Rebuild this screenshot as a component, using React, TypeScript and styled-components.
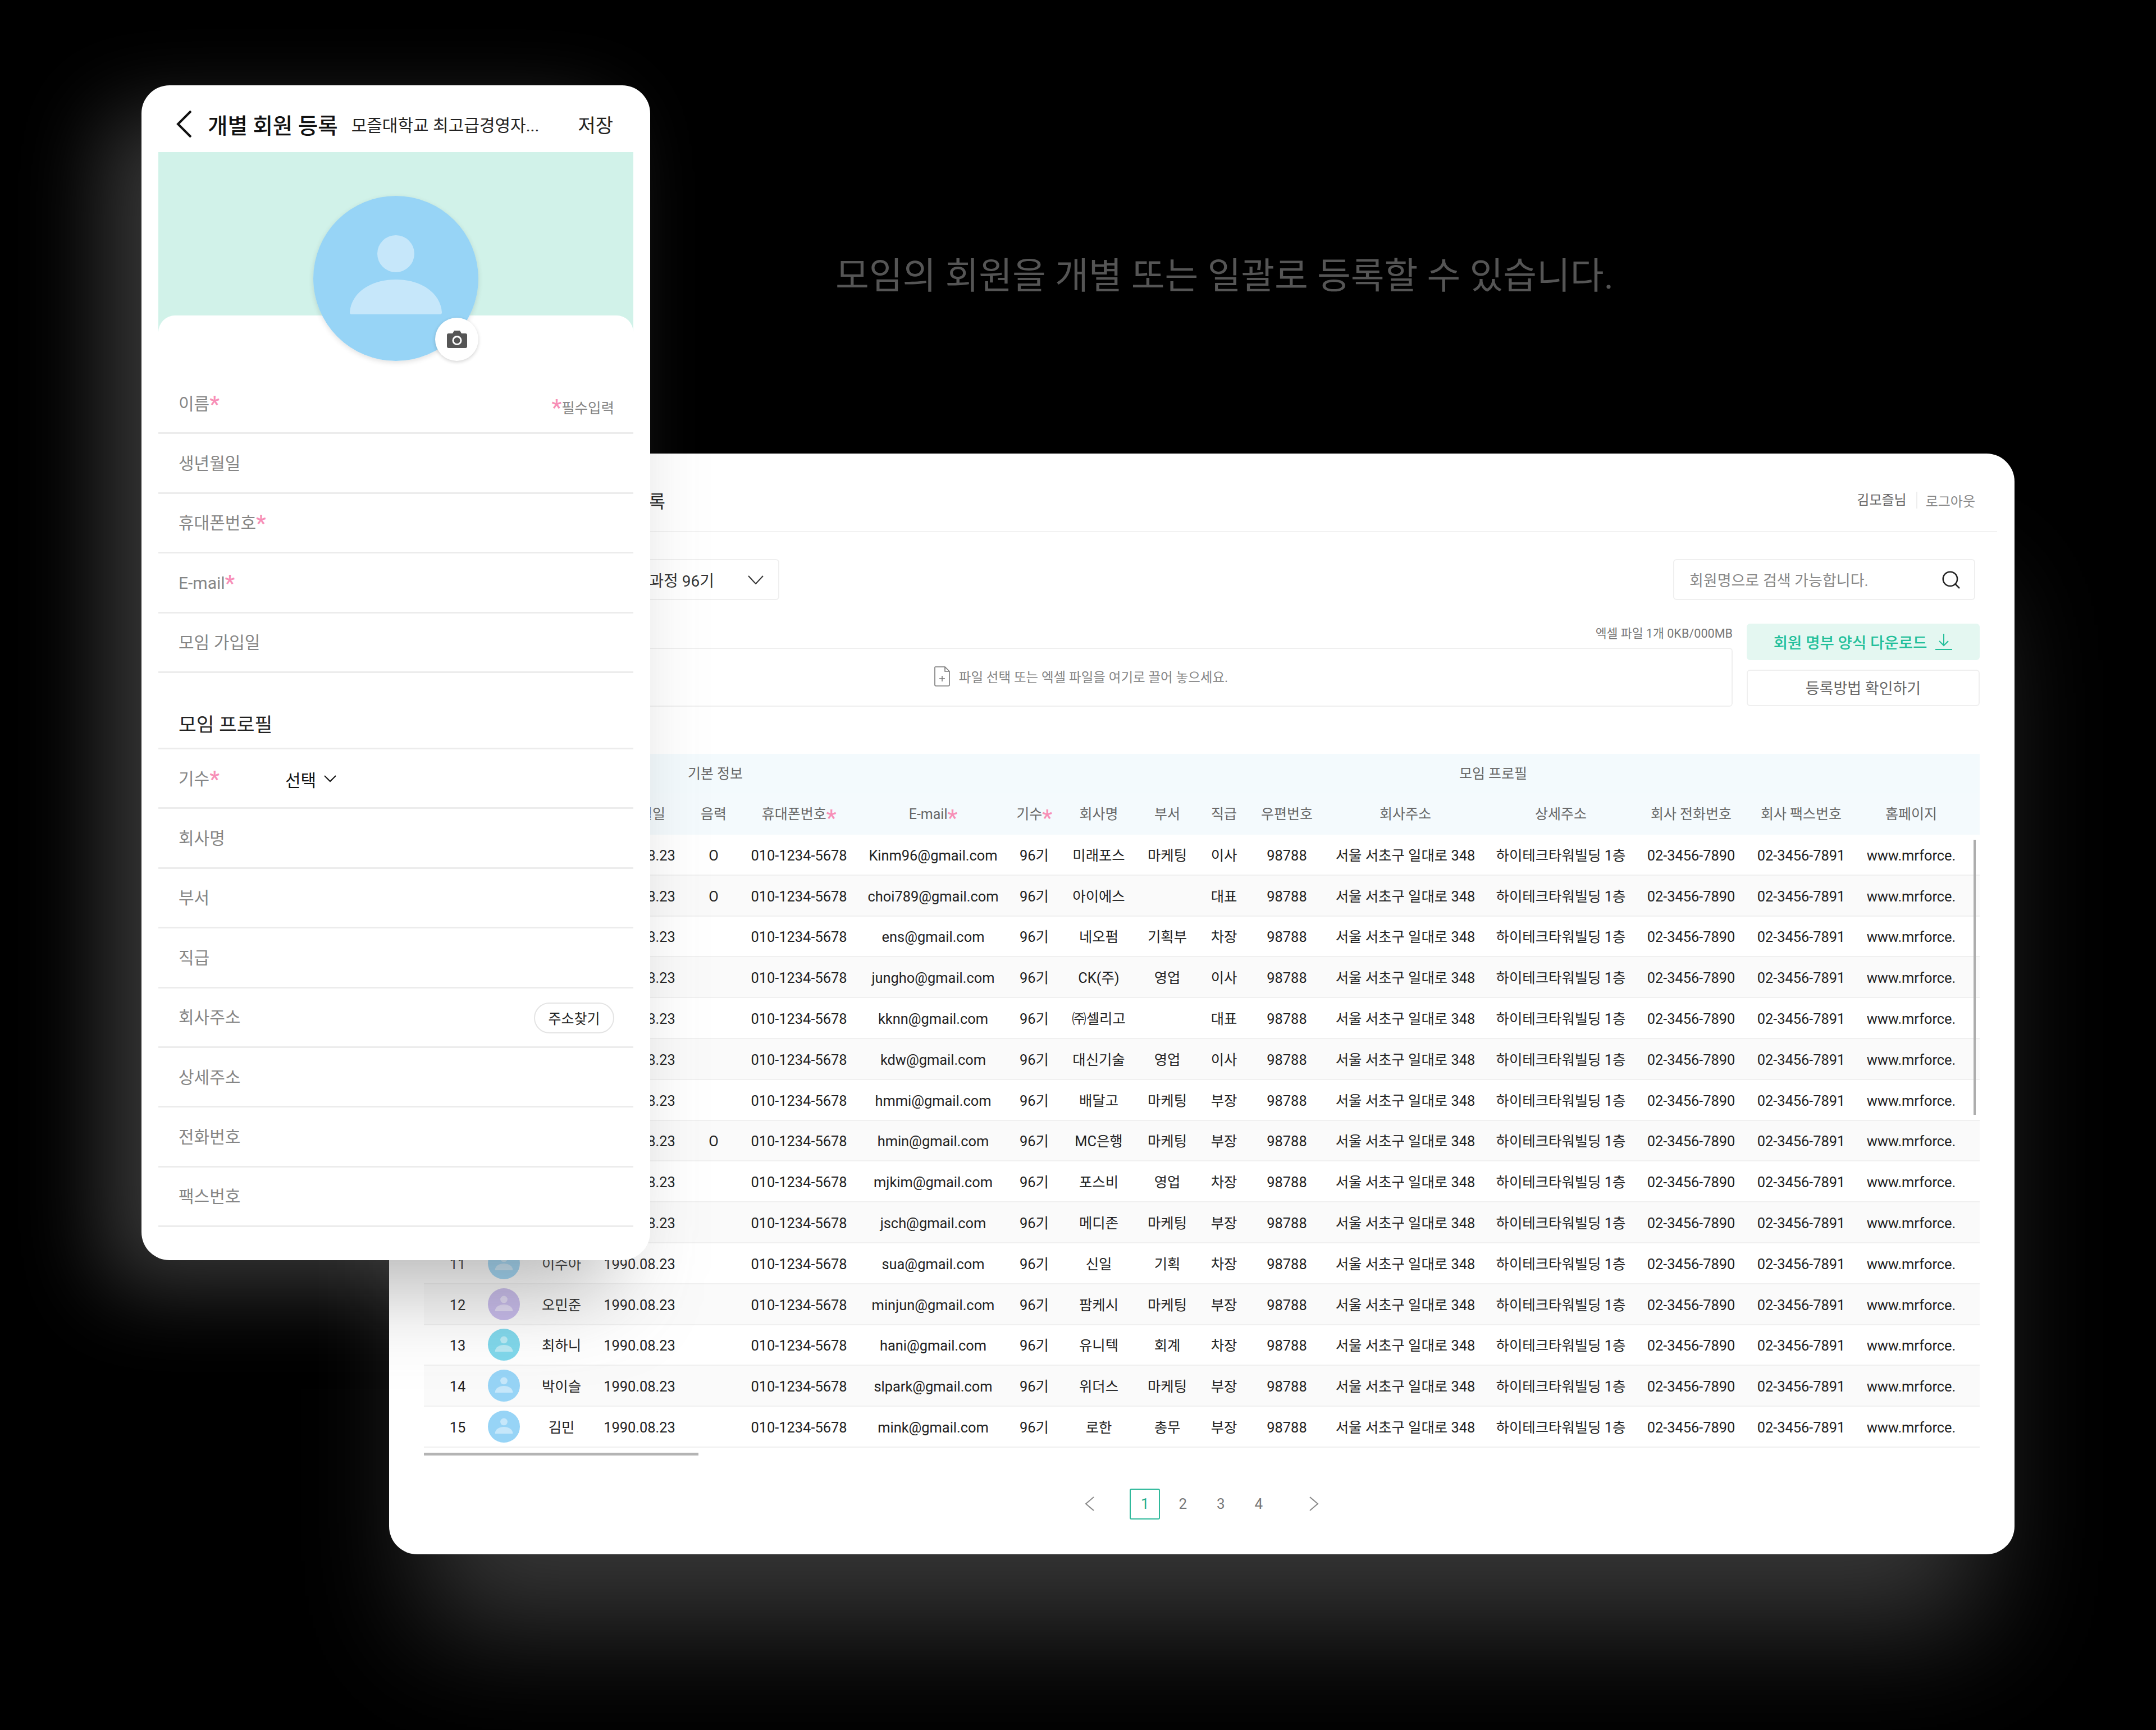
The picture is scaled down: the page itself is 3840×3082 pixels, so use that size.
import styled, { createGlobalStyle } from "styled-components";
import { Search } from "lucide-react";

const FONT = `Roboto, "Noto Sans CJK KR", "Noto Sans", sans-serif`;
const COLUMNS = "112px 60px 146px 132px 132px 172px 306px 54px 176px 68px 134px 90px 332px 222px 242px 150px 242px";

const headers = [
  { label: "번호" },
  { label: "사진" },
  { label: "이름", required: true },
  { label: "생년월일" },
  { label: "음력" },
  { label: "휴대폰번호", required: true },
  { label: "E-mail", required: true },
  { label: "기수", required: true },
  { label: "회사명" },
  { label: "부서" },
  { label: "직급" },
  { label: "우편번호" },
  { label: "회사주소" },
  { label: "상세주소" },
  { label: "회사 전화번호" },
  { label: "회사 팩스번호" },
  { label: "홈페이지" },
];

const members = [
  { name: "김나연", lunar: "O", email: "Kinm96@gmail.com", company: "미래포스", dept: "마케팅", rank: "이사", tone: "blue" },
  { name: "최지우", lunar: "O", email: "choi789@gmail.com", company: "아이에스", dept: "", rank: "대표", tone: "blue" },
  { name: "이은수", lunar: "", email: "ens@gmail.com", company: "네오펌", dept: "기획부", rank: "차장", tone: "teal" },
  { name: "정호", lunar: "", email: "jungho@gmail.com", company: "CK(주)", dept: "영업", rank: "이사", tone: "blue" },
  { name: "김경은", lunar: "", email: "kknn@gmail.com", company: "㈜셀리고", dept: "", rank: "대표", tone: "purple" },
  { name: "강다원", lunar: "", email: "kdw@gmail.com", company: "대신기술", dept: "영업", rank: "이사", tone: "blue" },
  { name: "한미", lunar: "", email: "hmmi@gmail.com", company: "배달고", dept: "마케팅", rank: "부장", tone: "teal" },
  { name: "한민", lunar: "O", email: "hmin@gmail.com", company: "MC은행", dept: "마케팅", rank: "부장", tone: "blue" },
  { name: "문지경", lunar: "", email: "mjkim@gmail.com", company: "포스비", dept: "영업", rank: "차장", tone: "blue" },
  { name: "장서희", lunar: "", email: "jsch@gmail.com", company: "메디존", dept: "마케팅", rank: "부장", tone: "teal" },
  { name: "이수아", lunar: "", email: "sua@gmail.com", company: "신일", dept: "기획", rank: "차장", tone: "blue" },
  { name: "오민준", lunar: "", email: "minjun@gmail.com", company: "팜케시", dept: "마케팅", rank: "부장", tone: "purple" },
  { name: "최하니", lunar: "", email: "hani@gmail.com", company: "유니텍", dept: "회계", rank: "차장", tone: "teal" },
  { name: "박이슬", lunar: "", email: "slpark@gmail.com", company: "위더스", dept: "마케팅", rank: "부장", tone: "blue" },
  { name: "김민", lunar: "", email: "mink@gmail.com", company: "로한", dept: "총무", rank: "부장", tone: "blue" },
];

const tones: Record<string, string> = { blue: "#97d4f6", purple: "#c5b8ea", teal: "#7fd8ec" };

const basicFields = [
  { label: "생년월일" },
  { label: "휴대폰번호", required: true },
  { label: "E-mail", required: true },
  { label: "모임 가입일" },
];

const GlobalStyle = createGlobalStyle`
  html, body {
    margin: 0;
    background: #000;
    font-family: ${FONT};
  }
  * {
    box-sizing: border-box;
  }
`;

const Canvas = styled.div`
  position: relative;
  width: 3840px;
  height: 3082px;
  overflow: hidden;
  background: #000;
  padding: 445px 0 0 1488px;
`;

const Headline = styled.h1`
  margin: 0;
  font-size: 65px;
  line-height: 94px;
  font-weight: 400;
  color: #555;
  white-space: nowrap;
`;

/* windows on the canvas */
const Desktop = styled.section`
  position: absolute;
  left: 693px;
  top: 808px;
  width: 2895px;
  height: 1961px;
  padding: 0 62px;
  background: #fff;
  border-radius: 50px;
  box-shadow: 0 190px 200px -60px rgba(110, 110, 110, 0.5);
`;

const Phone = styled.section`
  position: absolute;
  left: 252px;
  top: 152px;
  width: 906px;
  height: 2093px;
  padding: 0 30px;
  background: #fff;
  border-radius: 50px;
  box-shadow: -70px 50px 150px rgba(110, 110, 110, 0.5);
`;

const PhoneHeader = styled.header`
  display: flex;
  align-items: center;
  height: 119px;
  padding: 19px 36px 0 31px;
`;

const BackIcon = styled.svg`
  width: 30px;
  height: 50px;
  margin-right: 27px;
  flex: none;
`;

const PhoneTitle = styled.h2`
  margin: 0 24px 0 0;
  font-size: 38.5px;
  font-weight: 500;
  color: #111;
  white-space: nowrap;
`;

const PhoneSubtitle = styled.span`
  font-size: 30px;
  color: #222;
  white-space: nowrap;
`;

const SaveAction = styled.span`
  margin-left: auto;
  font-size: 34px;
  color: #222;
`;

const Hero = styled.div`
  position: relative;
  height: 321px;
  background: #d1f2e9;
`;

const AvatarCircle = styled.div<{ $size: number; $tone: string }>`
  position: relative;
  flex: none;
  width: ${({ $size }) => $size}px;
  height: ${({ $size }) => $size}px;
  border-radius: 50%;
  background: ${({ $tone }) => $tone};
`;

const HeroAvatar = styled.div`
  position: absolute;
  left: 276px;
  top: 78px;
  z-index: 2;
  border-radius: 50%;
  box-shadow: 0 3px 10px rgba(0, 0, 0, 0.12);
`;

const CameraBadge = styled.div`
  position: absolute;
  right: 0;
  bottom: 0;
  display: flex;
  align-items: center;
  justify-content: center;
  width: 77px;
  height: 77px;
  border-radius: 50%;
  background: #fff;
  box-shadow: 0 2px 6px rgba(0, 0, 0, 0.18);
`;

const Sheet = styled.div`
  position: relative;
  z-index: 1;
  margin-top: -30px;
  padding-top: 105px;
  background: #fff;
  border-radius: 30px 30px 0 0;
`;

const FormRow = styled.div`
  display: flex;
  align-items: center;
  height: 106.4px;
  padding: 2px 34px 0 36px;
  border-bottom: 3px solid #ececec;
`;

const FormLabel = styled.span<{ $wide?: boolean }>`
  font-size: 30px;
  line-height: 44px;
  color: #858585;
  white-space: nowrap;
  width: ${({ $wide }) => ($wide ? "190px" : "auto")};
`;

/* Roboto's asterisk has the five arms of the reference, it sits high in the line */
const Star = styled.span`
  display: inline-block;
  height: 20px;
  font-family: Roboto, sans-serif;
  font-size: 40px;
  font-weight: 500;
  line-height: 34px;
  color: #f78fb7;
  vertical-align: -4px;
`;

const RequiredNote = styled.span`
  margin-left: auto;
  padding-top: 10px;
  font-size: 25.500px;
  color: #858585;
`;

const SelectValue = styled.span`
  display: flex;
  align-items: center;
  gap: 14px;
  font-size: 30px;
  color: #111;
`;

const AddressButton = styled.button`
  margin-left: auto;
  width: 143px;
  height: 55px;
  padding: 0;
  background: #fff;
  border: 2px solid #e4e4e4;
  border-radius: 28px;
  font-family: ${FONT};
  font-size: 25px;
  color: #222;
`;

const SectionTitle = styled.h3`
  display: flex;
  align-items: flex-end;
  height: 136px;
  margin: 0;
  padding: 0 36px 19px;
  border-bottom: 3px solid #ececec;
  font-size: 34.5px;
  line-height: 44px;
  font-weight: 400;
  color: #222;
`;

const DesktopHeader = styled.header`
  display: flex;
  align-items: center;
  justify-content: space-between;
  height: 140px;
  margin: 0 -31px;
  padding: 28px 39px 0 31px;
  border-bottom: 2px solid #f2f2f2;
`;

const DesktopTitle = styled.h2`
  width: 430px;
  margin: 0;
  text-align: right;
  font-size: 32px;
  font-weight: 400;
  color: #222;
  white-space: nowrap;
`;

const UserMenu = styled.div`
  display: flex;
  align-items: center;
  font-size: 24px;
`;

const UserName = styled.span`
  padding-right: 17px;
  border-right: 2px solid #eee;
  color: #666;
  line-height: 30px;
`;

const Logout = styled.span`
  padding-left: 15px;
  color: #888;
`;

const Toolbar = styled.div`
  display: flex;
  justify-content: space-between;
  margin-top: 48px;
  padding-right: 8px;
`;

const CourseSelect = styled.div`
  display: flex;
  align-items: center;
  justify-content: flex-end;
  gap: 60px;
  width: 633px;
  height: 73px;
  padding-right: 26px;
  border: 2px solid #efefef;
  border-radius: 6px;
  font-size: 28px;
  color: #333;
  white-space: nowrap;
`;

const SearchBox = styled.div`
  display: flex;
  align-items: center;
  justify-content: space-between;
  width: 538px;
  height: 73px;
  padding: 0 22px 0 27px;
  border: 2px solid #efefef;
  border-radius: 6px;
  font-size: 27px;
  color: #888;
`;

const UploadRow = styled.div`
  display: grid;
  grid-template-columns: 1fr 415px;
  gap: 25px;
  margin-top: 42px;
`;

const UploadColumn = styled.div`
  display: flex;
  flex-direction: column;
`;

const UploadHint = styled.div`
  height: 43px;
  text-align: right;
  font-size: 21.600px;
  line-height: 36px;
  color: #777;
`;

const DropZone = styled.div`
  display: flex;
  align-items: center;
  justify-content: center;
  gap: 16px;
  height: 105px;
  padding: 0 0 3px 10px;
  border: 2px solid #efefef;
  border-radius: 6px;
  font-size: 23.500px;
  color: #858585;
`;

const ButtonColumn = styled.div`
  display: flex;
  flex-direction: column;
  gap: 17px;
`;

const ActionButton = styled.div<{ $primary?: boolean }>`
  display: flex;
  align-items: center;
  justify-content: center;
  gap: 14px;
  height: 65px;
  padding-bottom: 2px;
  border-radius: 6px;
  border: 2px solid ${({ $primary }) => ($primary ? "#e4f7f1" : "#efefef")};
  background: ${({ $primary }) => ($primary ? "#e4f7f1" : "#fff")};
  color: ${({ $primary }) => ($primary ? "#22bf9a" : "#666")};
  font-size: ${({ $primary }) => ($primary ? 27.5 : 27)}px;
  font-weight: ${({ $primary }) => ($primary ? 500 : 400)};
`;

const TableWrap = styled.div`
  position: relative;
  margin-top: 84px;
`;

const GroupRow = styled.div`
  display: grid;
  grid-template-columns: 1038px 1fr;
  height: 69px;
  background: #f3fafd;
  font-size: 25px;
  color: #666;
`;

const HeadRow = styled.div`
  display: grid;
  grid-template-columns: ${COLUMNS};
  height: 75px;
  background: #f4fafd;
  font-size: 25px;
  color: #666;
`;

const Row = styled.div<{ $striped: boolean }>`
  display: grid;
  grid-template-columns: ${COLUMNS};
  height: 72.8px;
  background: ${({ $striped }) => ($striped ? "#fafafa" : "#fff")};
  border-bottom: 2px solid #f0f0f0;
  font-size: 25.4px;
  color: #222;
`;

const Cell = styled.div<{ $offset?: number }>`
  display: flex;
  align-items: center;
  justify-content: center;
  min-width: 0;
  padding-left: ${({ $offset }) => $offset ?? 0}px;
  padding-top: 3px;
  line-height: 36px;
  white-space: nowrap;
`;

const AvatarCell = styled.div`
  display: flex;
  align-items: center;
  justify-content: center;
`;

const VerticalThumb = styled.div`
  position: absolute;
  right: 7px;
  top: 153px;
  width: 4px;
  height: 490px;
  background: #adadad;
`;

const HorizontalThumb = styled.div`
  width: 489px;
  height: 5px;
  margin-top: 9px;
  background: #b4b4b4;
`;

const Pager = styled.nav`
  display: flex;
  align-items: center;
  justify-content: center;
  gap: 13.5px;
  margin-top: 59px;
`;

const PageArrow = styled.svg<{ $side: "left" | "right" }>`
  width: 54px;
  height: 26px;
  margin: ${({ $side }) => ($side === "left" ? "0 31px 0 0" : "0 0 0 31px")};
`;

const PageNumber = styled.span<{ $active?: boolean }>`
  display: flex;
  align-items: center;
  justify-content: center;
  width: 54px;
  height: 55px;
  border: 2px solid ${({ $active }) => ($active ? "#2fb99b" : "transparent")};
  border-radius: 3px;
  font-size: 26px;
  color: ${({ $active }) => ($active ? "#1fae8e" : "#777")};
`;

function PersonAvatar({ size, tone }: { size: number; tone: string }) {
  return (
    <AvatarCircle $size={size} $tone={tone}>
      <svg width={size} height={size} viewBox="0 0 294 294">
        <circle cx="147" cy="103" r="33" fill="#fff" fillOpacity="0.45" />
        <path d="M65 207C68 171 104 149 147 149C190 149 226 171 229 207C229 210 228 211 225 211H69C66 211 65 210 65 207Z" fill="#fff" fillOpacity="0.45" />
      </svg>
    </AvatarCircle>
  );
}

function Label({ text, required }: { text: string; required?: boolean }) {
  return (
    <>
      {text}
      {required && <Star>*</Star>}
    </>
  );
}

export default function App() {
  return (
    <>
      <GlobalStyle />
      <Canvas>
        <Headline>모임의 회원을 개별 또는 일괄로 등록할 수 있습니다.</Headline>

        {/* Desktop window */}
        <Desktop>
          <DesktopHeader>
            <DesktopTitle>모즐대학교 회원 일괄 등록</DesktopTitle>
            <UserMenu>
              <UserName>김모즐님</UserName>
              <Logout>로그아웃</Logout>
            </UserMenu>
          </DesktopHeader>

          <Toolbar>
            <CourseSelect>
              모즐대학교 최고급경영자 과정 96기
              <svg width="28" height="16" viewBox="0 0 28 16" fill="none" stroke="#333" strokeWidth="2">
                <path d="M1 1L14 15L27 1" />
              </svg>
            </CourseSelect>
            <SearchBox>
              회원명으로 검색 가능합니다.
              <Search size={38} strokeWidth={1.6} color="#222" />
            </SearchBox>
          </Toolbar>

          <UploadRow>
            <UploadColumn>
              <UploadHint>엑셀 파일 1개 0KB/000MB</UploadHint>
              <DropZone>
                <svg width="28" height="36" viewBox="0 0 28 36" fill="none" stroke="#777" strokeWidth="1.6">
                  <path d="M2 1H19L27 9V33C27 34 26 35 25 35H3C2 35 1 34 1 33V2C1 1.500 1.500 1 2 1Z" />
                  <path d="M19 1V9H27M14 17V27M9 22H19" />
                </svg>
                파일 선택 또는 엑셀 파일을 여기로 끌어 놓으세요.
              </DropZone>
            </UploadColumn>
            <ButtonColumn>
              <ActionButton $primary>
                회원 명부 양식 다운로드
                <svg width="32" height="30" viewBox="0 0 32 30" fill="none" stroke="#22bf9a" strokeWidth="2">
                  <path d="M16 1V22M8 14L16 22L24 14M1 29H31" />
                </svg>
              </ActionButton>
              <ActionButton>등록방법 확인하기</ActionButton>
            </ButtonColumn>
          </UploadRow>

          <TableWrap>
            <GroupRow>
              <Cell>기본 정보</Cell>
              <Cell>모임 프로필</Cell>
            </GroupRow>
            <HeadRow>
              {headers.map((header, index) => (
                <Cell key={header.label} $offset={index === 0 ? 8 : 0}>
                  <Label text={header.label} required={header.required} />
                </Cell>
              ))}
            </HeadRow>
            {members.map((member, index) => (
              <Row key={member.email} $striped={index % 2 === 1}>
                <Cell $offset={8}>{index + 1}</Cell>
                <AvatarCell>
                  <PersonAvatar size={57} tone={tones[member.tone]} />
                </AvatarCell>
                <Cell>{member.name}</Cell>
                <Cell>1990.08.23</Cell>
                <Cell>{member.lunar}</Cell>
                <Cell>010-1234-5678</Cell>
                <Cell>{member.email}</Cell>
                <Cell>96기</Cell>
                <Cell>{member.company}</Cell>
                <Cell>{member.dept}</Cell>
                <Cell>{member.rank}</Cell>
                <Cell>98788</Cell>
                <Cell>서울 서초구 일대로 348</Cell>
                <Cell>하이테크타워빌딩 1층</Cell>
                <Cell>02-3456-7890</Cell>
                <Cell>02-3456-7891</Cell>
                <Cell>www.mrforce.</Cell>
              </Row>
            ))}
            <VerticalThumb />
            <HorizontalThumb />
          </TableWrap>

          <Pager>
            <PageArrow $side="left" viewBox="0 0 54 26" fill="none" stroke="#888" strokeWidth="2">
              <path d="M34 1L20 13L34 25" />
            </PageArrow>
            <PageNumber $active>1</PageNumber>
            <PageNumber>2</PageNumber>
            <PageNumber>3</PageNumber>
            <PageNumber>4</PageNumber>
            <PageArrow $side="right" viewBox="0 0 54 26" fill="none" stroke="#888" strokeWidth="2">
              <path d="M20 1L34 13L20 25" />
            </PageArrow>
          </Pager>
        </Desktop>

        {/* Phone window */}
        <Phone>
          <PhoneHeader>
            <BackIcon viewBox="0 0 30 50" fill="none" stroke="#111" strokeWidth="4">
              <path d="M27 2L4 25L27 48" />
            </BackIcon>
            <PhoneTitle>개별 회원 등록</PhoneTitle>
            <PhoneSubtitle>모즐대학교 최고급경영자...</PhoneSubtitle>
            <SaveAction>저장</SaveAction>
          </PhoneHeader>

          <Hero>
            <HeroAvatar>
              <PersonAvatar size={294} tone="#97d4f6" />
              <CameraBadge>
                <svg width="36" height="31" viewBox="0 0 36 31">
                  <path
                    fillRule="evenodd"
                    fill="#555"
                    d="M3 5H10L13 0H23L26 5H33C35 5 36 6 36 8V28C36 30 35 31 33 31H3C1 31 0 30 0 28V8C0 6 1 5 3 5ZM18 9A8.500 8.500 0 1 0 18 26A8.500 8.500 0 1 0 18 9ZM18 12A5.500 5.500 0 1 1 18 23A5.500 5.500 0 1 1 18 12Z"
                  />
                </svg>
              </CameraBadge>
            </HeroAvatar>
          </Hero>

          <Sheet>
            <FormRow>
              <FormLabel>
                <Label text="이름" required />
              </FormLabel>
              <RequiredNote>
                <Star>*</Star>필수입력
              </RequiredNote>
            </FormRow>
            {basicFields.map((field) => (
              <FormRow key={field.label}>
                <FormLabel>
                  <Label text={field.label} required={field.required} />
                </FormLabel>
              </FormRow>
            ))}

            <SectionTitle>모임 프로필</SectionTitle>

            <FormRow>
              <FormLabel $wide>
                <Label text="기수" required />
              </FormLabel>
              <SelectValue>
                선택
                <svg width="22" height="13" viewBox="0 0 22 13" fill="none" stroke="#111" strokeWidth="2">
                  <path d="M1 1L11 11L21 1" />
                </svg>
              </SelectValue>
            </FormRow>
            <FormRow>
              <FormLabel>회사명</FormLabel>
            </FormRow>
            <FormRow>
              <FormLabel>부서</FormLabel>
            </FormRow>
            <FormRow>
              <FormLabel>직급</FormLabel>
            </FormRow>
            <FormRow>
              <FormLabel>회사주소</FormLabel>
              <AddressButton>주소찾기</AddressButton>
            </FormRow>
            <FormRow>
              <FormLabel>상세주소</FormLabel>
            </FormRow>
            <FormRow>
              <FormLabel>전화번호</FormLabel>
            </FormRow>
            <FormRow>
              <FormLabel>팩스번호</FormLabel>
            </FormRow>
          </Sheet>
        </Phone>
      </Canvas>
    </>
  );
}
